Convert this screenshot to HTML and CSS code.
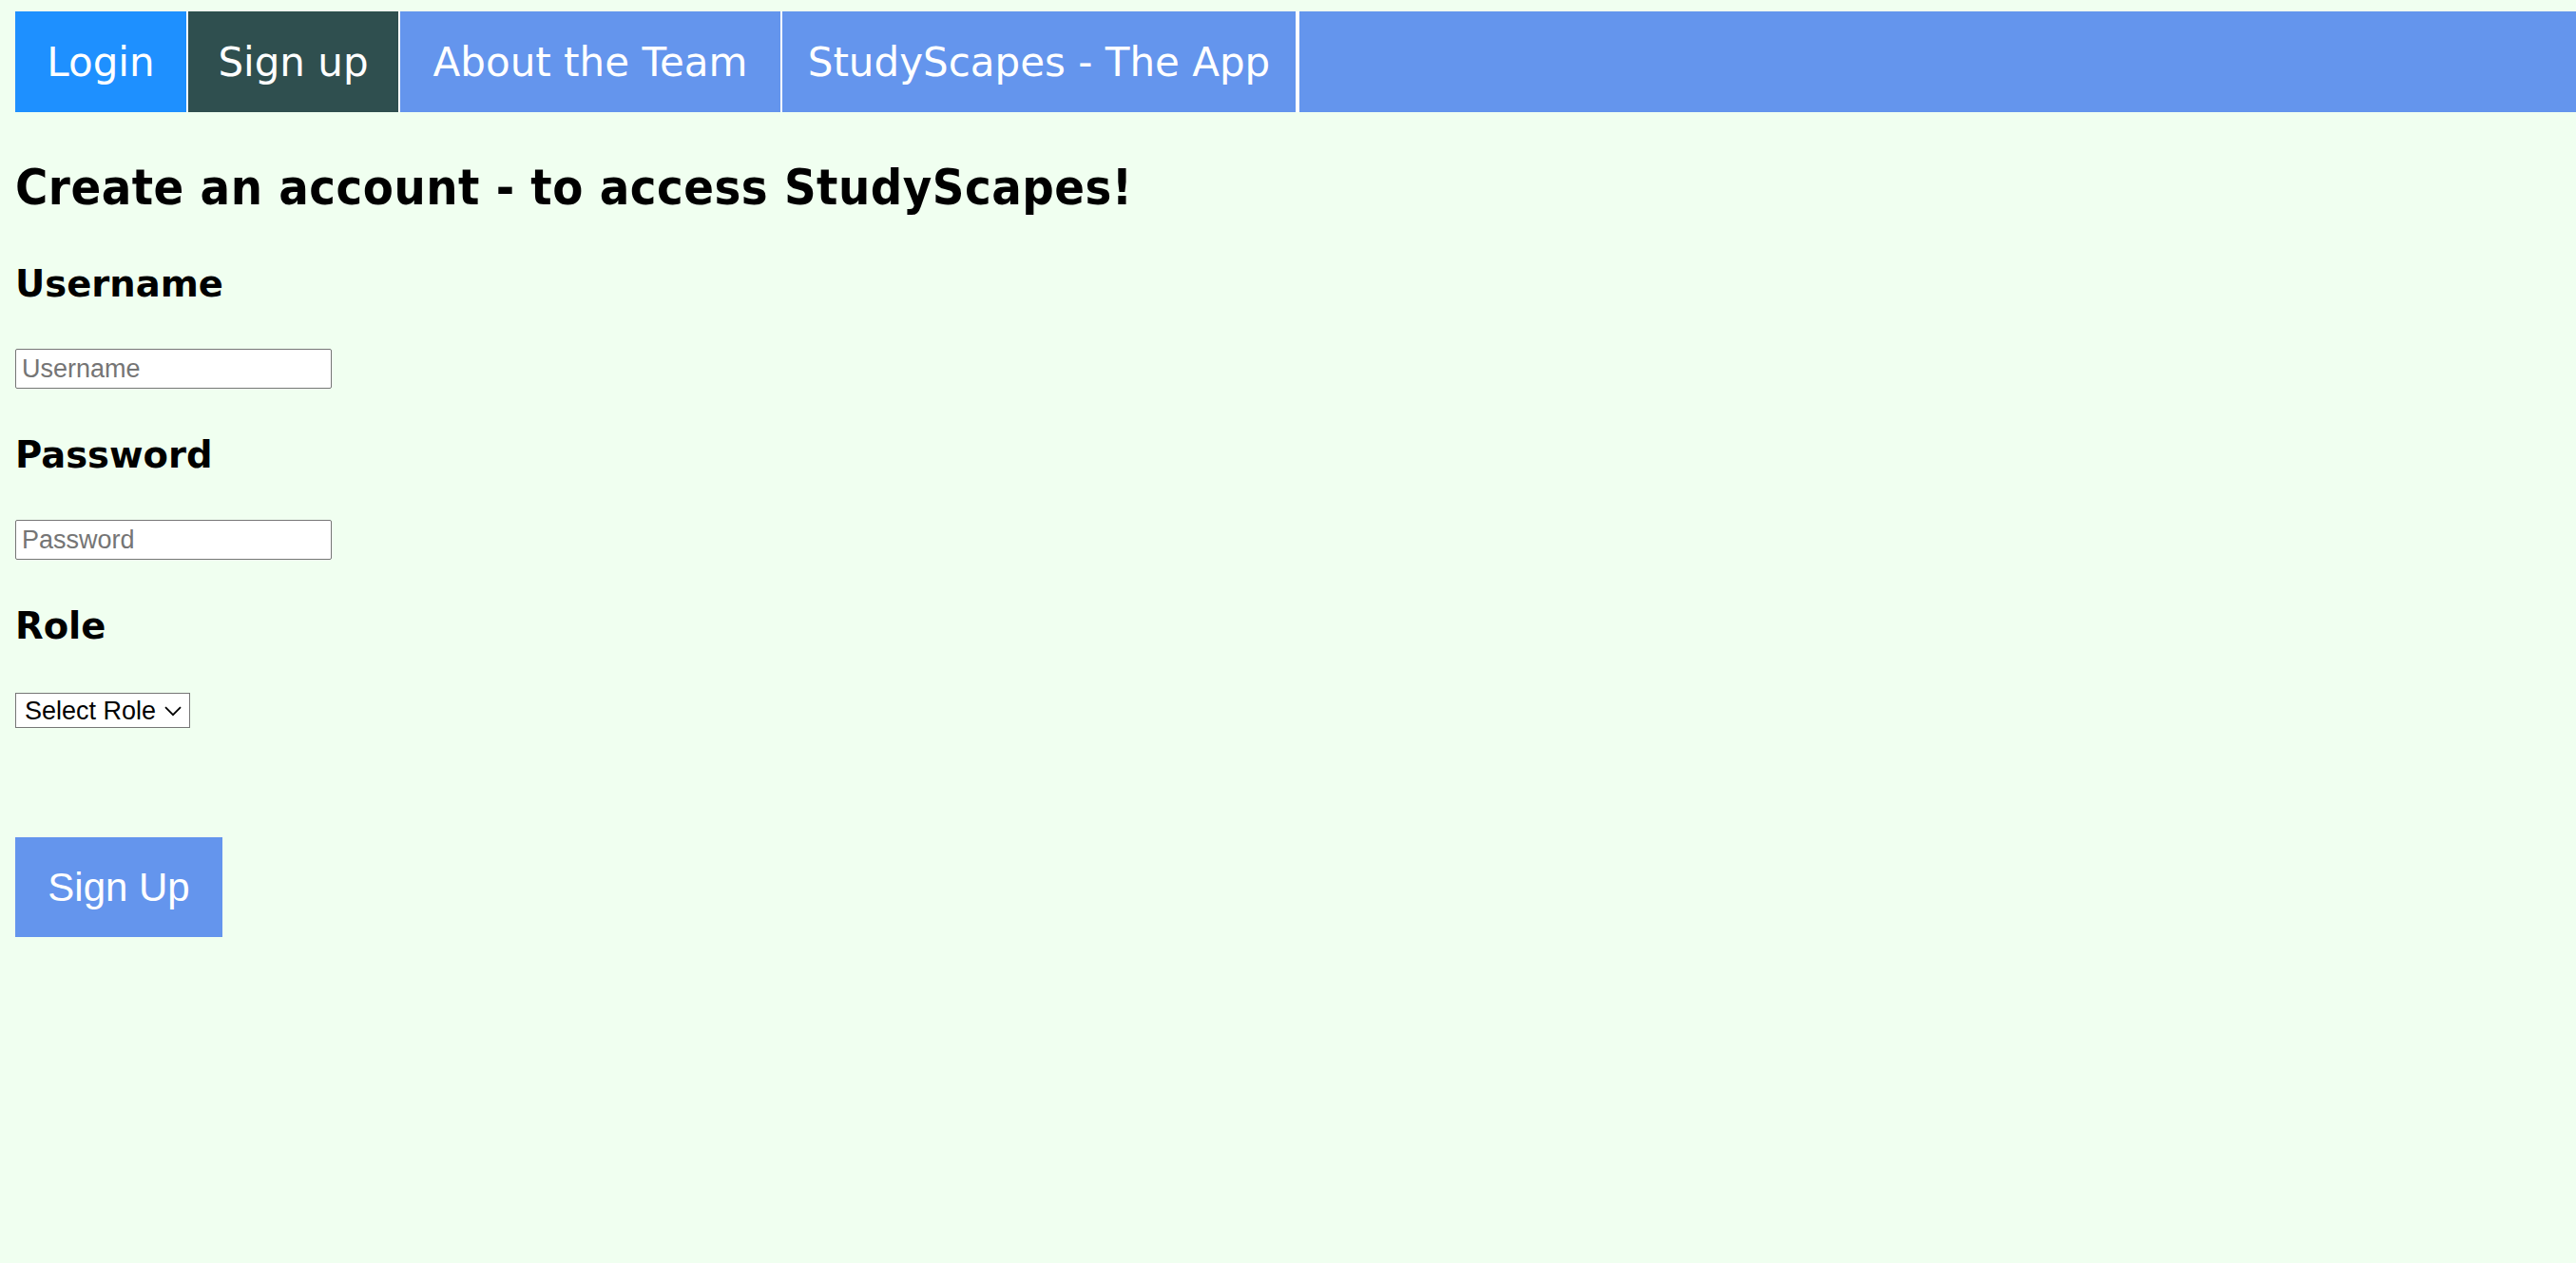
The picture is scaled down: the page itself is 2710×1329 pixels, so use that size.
FILE: index.html
```html
<!DOCTYPE html>
<html lang="en">
<head>
<meta charset="utf-8">
<title>Sign up - StudyScapes</title>
<link rel="stylesheet" href="styles.css">
</head>
<body>
<nav class="navbar">
  <a class="nav-item nav-login" href="#">Login</a>
  <a class="nav-item nav-active" href="#">Sign up</a>
  <a class="nav-item nav-team" href="#">About the Team</a>
  <a class="nav-item nav-last" href="#">StudyScapes - The App</a>
</nav>
<main class="content">
  <h1 class="title">Create an account - to access StudyScapes!</h1>
  <form class="signup-form">
    <h2 class="field-label field-first">Username</h2>
    <input class="text-input" type="text" placeholder="Username">
    <h2 class="field-label">Password</h2>
    <input class="text-input" type="password" placeholder="Password">
    <h2 class="field-label">Role</h2>
    <div class="select-wrap">
      <select class="role-select">
        <option>Select Role</option>
        <option>Student</option>
        <option>Teacher</option>
      </select>
      <svg class="chevron" width="18" height="11" viewBox="0 0 18 11"><path d="M1 1.2 L9 9.2 L17 1.2" fill="none" stroke="#000" stroke-width="1.8"/></svg>
    </div>
    <button class="submit-btn" type="button">Sign Up</button>
  </form>
</main>
</body>
</html>
```
FILE: styles.css
```css
html, body {
  background: #f0fff0;
}
body {
  margin: 12px 0 0 16px;
  font-family: "DejaVu Sans", "Liberation Sans", sans-serif;
  color: #000;
}
.navbar {
  display: flex;
  background: #6495ed;
  height: 106px;
}
.nav-item {
  display: block;
  box-sizing: content-box;
  padding: 29px 0 27px;
  font-size: 42px;
  line-height: 50px;
  text-align: center;
  color: #fff;
  text-decoration: none;
  border-right: 2px solid #fff;
  white-space: nowrap;
}
.nav-login {
  width: 180px;
  background: #1e90ff;
}
.nav-active {
  width: 221px;
  background: #2f4f4f;
}
.nav-team {
  width: 400px;
}
.nav-last {
  width: 540px;
  border-right-width: 4px;
}
.content {
  display: block;
}
.title {
  margin: 49px 0 0;
  font-family: "DejaVu Sans Condensed", "DejaVu Sans", sans-serif;
  font-stretch: condensed;
  font-weight: bold;
  font-size: 52px;
  line-height: 60px;
  letter-spacing: 0.5px;
}
.signup-form {
  display: flex;
  flex-direction: column;
  align-items: flex-start;
}
.field-label {
  margin: 47px 0 0;
  font-family: "DejaVu Sans", sans-serif;
  font-weight: bold;
  font-size: 38.5px;
  line-height: 45px;
}
.field-first {
  margin-top: 49px;
}
.text-input {
  box-sizing: border-box;
  margin-top: 46px;
  width: 333px;
  height: 42px;
  padding: 0 6px;
  border: 1px solid #767676;
  border-radius: 2px;
  background: #fff;
  font-family: "Liberation Sans", Arial, sans-serif;
  font-size: 27px;
  color: #000;
}
.text-input::placeholder {
  color: #757575;
}
.select-wrap {
  position: relative;
  margin-top: 48px;
}
.role-select {
  box-sizing: border-box;
  appearance: none;
  -webkit-appearance: none;
  display: block;
  width: 184px;
  height: 37px;
  padding: 0 0 0 9px;
  border: 1px solid #767676;
  border-radius: 0;
  background: #fff;
  font-family: "Liberation Sans", Arial, sans-serif;
  font-size: 27px;
  color: #000;
}
.chevron {
  position: absolute;
  left: 157px;
  top: 14px;
  pointer-events: none;
}
.submit-btn {
  margin-top: 115px;
  width: 218px;
  height: 105px;
  padding: 0;
  border: none;
  background: #6495ed;
  color: #fff;
  font-family: "Liberation Sans", Arial, sans-serif;
  font-size: 42px;
}
```
